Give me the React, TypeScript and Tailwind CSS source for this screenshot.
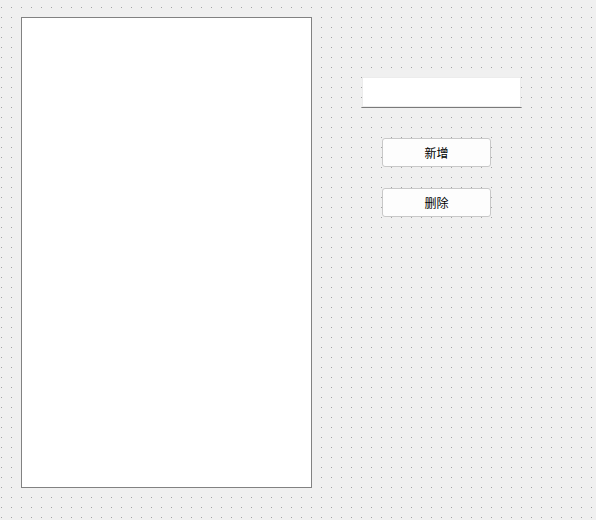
import React from 'react';

const App = () => {
  return (
    <div className="h-[520px] w-full overflow-hidden bg-[#f0f0f0] bg-[linear-gradient(to_bottom,transparent_0_1px,#f0f0f0_1px_10px),linear-gradient(to_right,#a4a4a4_0_1px,#f0f0f0_1px_10px)] bg-[length:10px_10px] bg-[position:1px_7px] font-['Noto_Sans_CJK_SC',sans-serif]">
      <div className="flex pl-[21px] pt-[17px]">
        {/* list widget */}
        <div className="h-[471px] w-[291px] border border-[#828282] bg-white" />

        <div className="ml-[50px] mt-[60px] flex flex-col">
          {/* line edit */}
          <div className="h-[31px] w-[159px] border-b border-[#7a7a7a] bg-white shadow-[inset_0_0_0_1px_#ececec]" />

          <div className="ml-[20px] mt-[30px] flex flex-col gap-[21px]">
            <button className="flex h-[29px] w-[109px] items-center justify-center rounded-[3px] border border-[#c8c8c8] bg-[#fdfdfd] text-[12px] leading-none text-black">
              新增
            </button>
            <button className="flex h-[29px] w-[109px] items-center justify-center rounded-[3px] border border-[#c8c8c8] bg-[#fdfdfd] text-[12px] leading-none text-black">
              删除
            </button>
          </div>
        </div>
      </div>
    </div>
  );
};

export default App;
